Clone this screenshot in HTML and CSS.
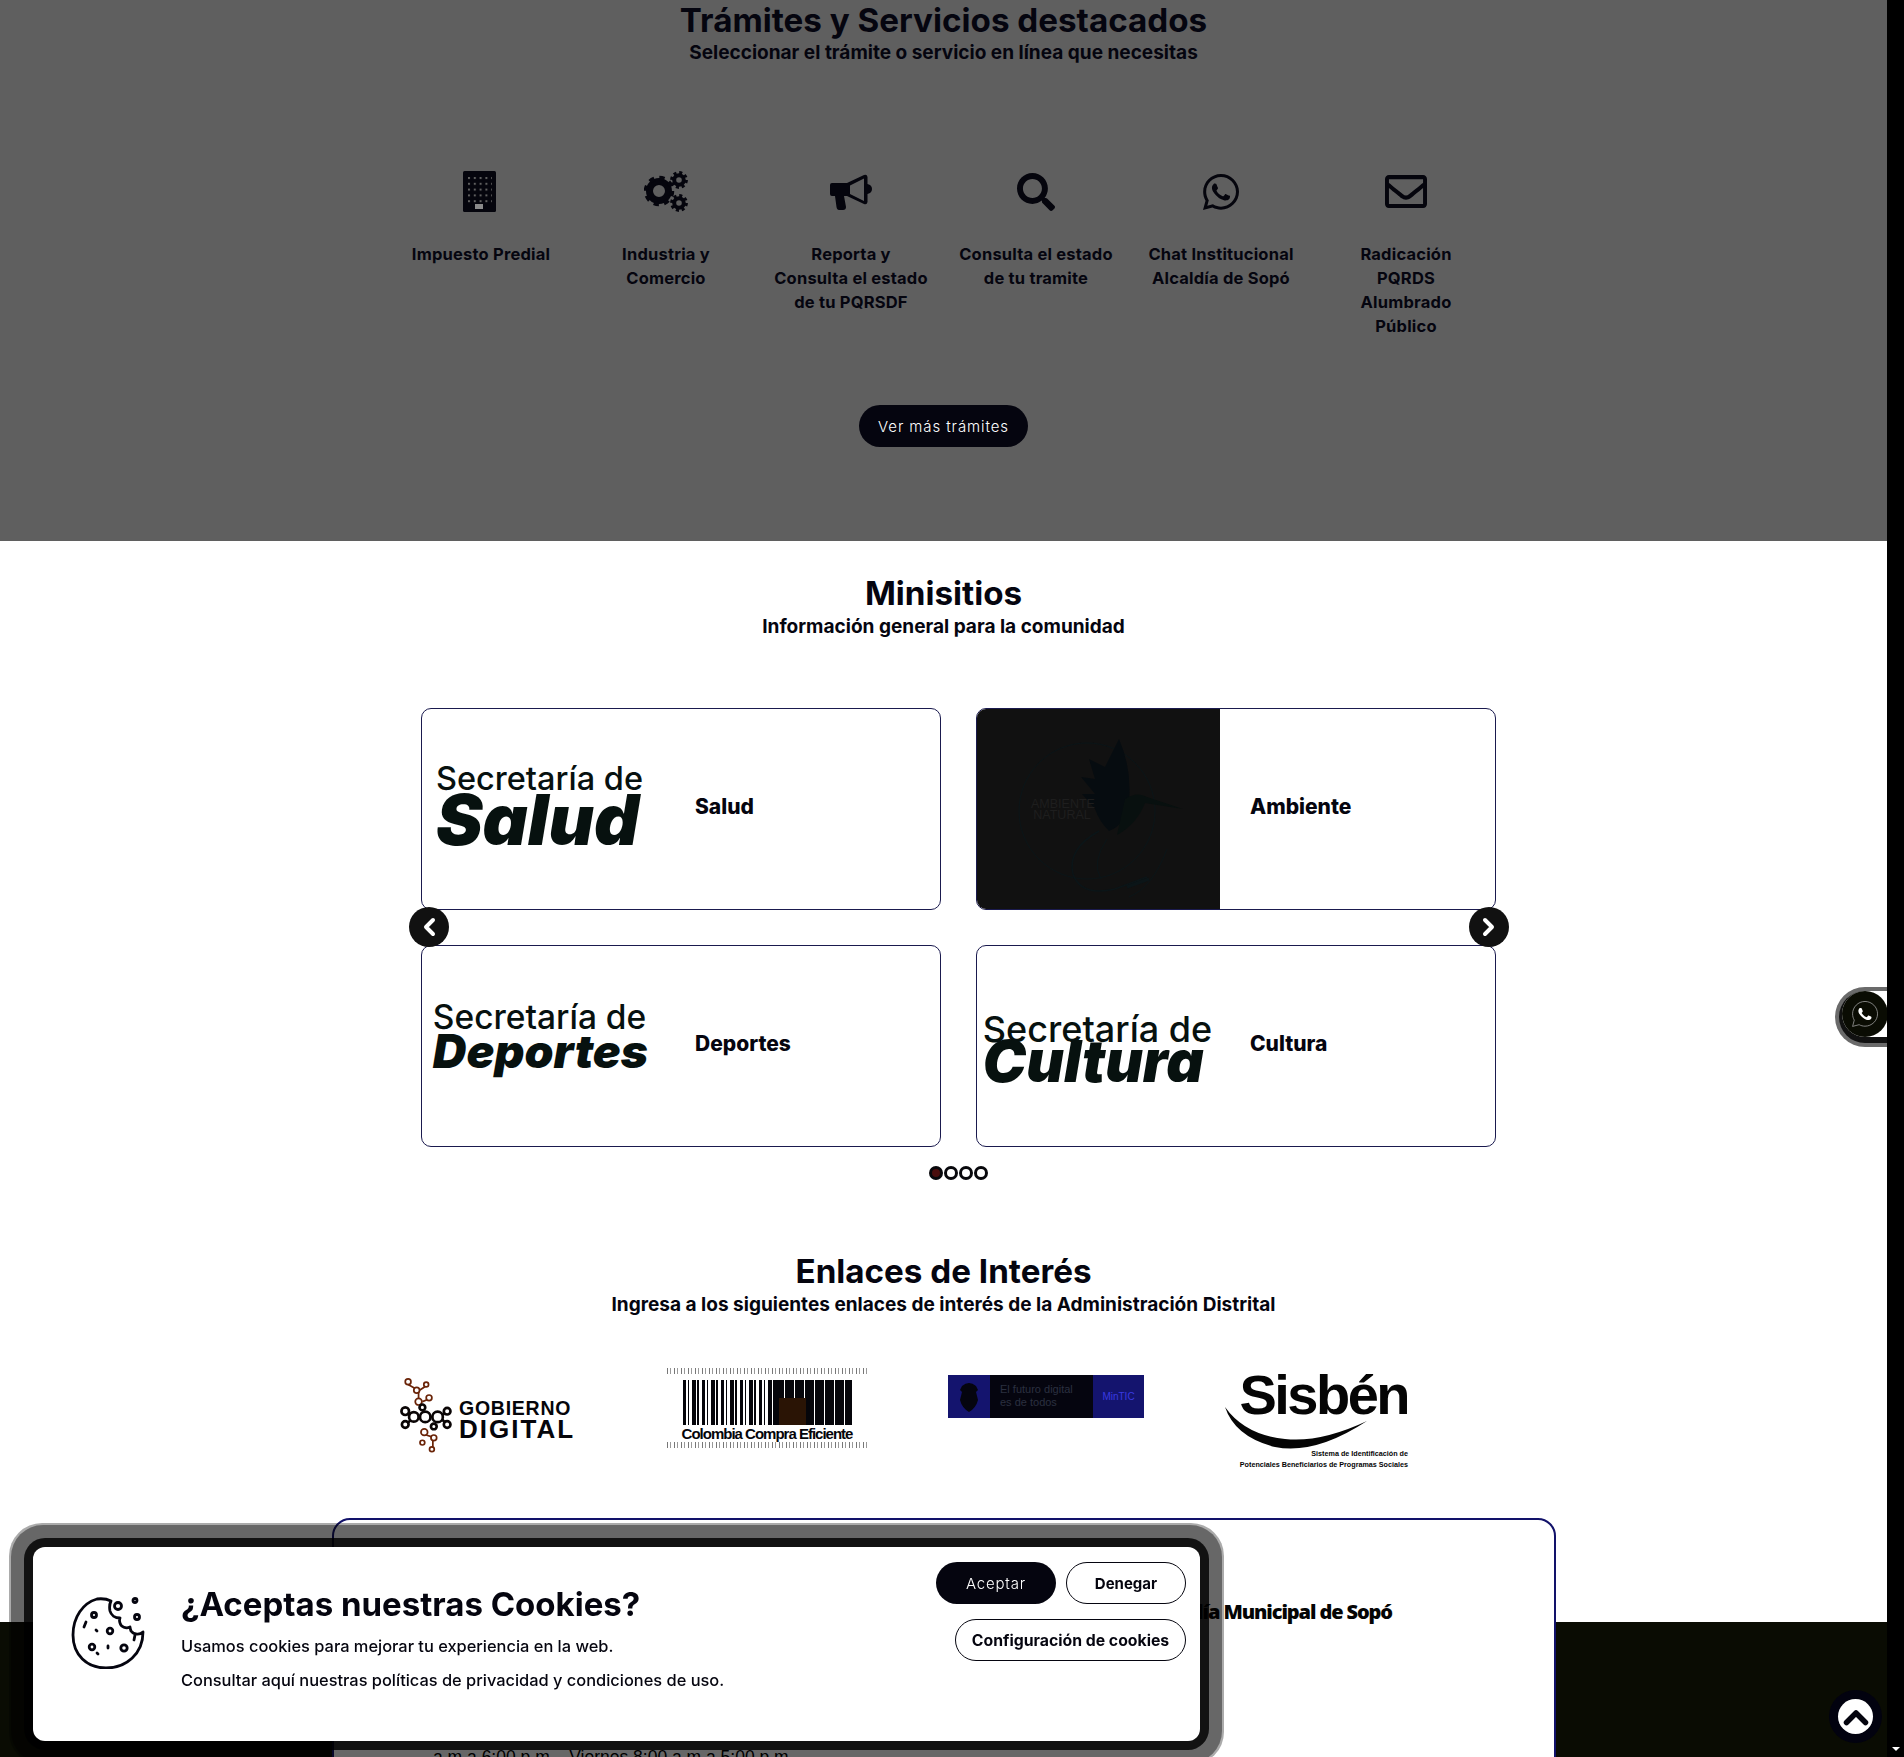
FILE: index.html
```html
<!DOCTYPE html>
<html lang="es">
<head>
<meta charset="utf-8">
<title>Alcaldía Municipal de Sopó</title>
<link rel="stylesheet" href="styles.css">
</head>
<body>
<div class="viewport">
  <main class="page">
    <section class="tramites">
      <h2 class="title">Trámites y Servicios destacados</h2>
      <p class="subtitle">Seleccionar el trámite o servicio en línea que necesitas</p>
      <div class="services">
        <a class="service">
          <span class="service-icon">
            <svg class="icon-building" width="33" height="41" viewBox="0 0 33 41"><defs><pattern id="win" x="5" y="6" width="5.8" height="5.8" patternUnits="userSpaceOnUse"><rect width="2" height="2" fill="#5f5f5f"/></pattern></defs><rect width="33" height="41" rx="1.5" fill="#05050d"/><rect x="5" y="6" width="24" height="28" fill="url(#win)"/><rect x="12" y="33" width="8" height="5" fill="#8a8a8a"/></svg>
          </span>
          <span class="service-label">Impuesto Predial</span>
        </a>
        <a class="service">
          <span class="service-icon">
            <svg width="44" height="41" viewBox="0 0 44 41" fill="none" stroke="#05050d"><circle cx="15" cy="20" r="9.5" stroke-width="7"/><circle cx="15" cy="20" r="13" stroke-width="4.5" stroke-dasharray="5.1 5.1"/><circle cx="35" cy="9" r="4.8" stroke-width="4"/><circle cx="35" cy="9" r="7.3" stroke-width="3.2" stroke-dasharray="3 2.73"/><circle cx="35" cy="32" r="4.8" stroke-width="4"/><circle cx="35" cy="32" r="7.3" stroke-width="3.2" stroke-dasharray="3 2.73"/></svg>
          </span>
          <span class="service-label">Industria y<br>Comercio</span>
        </a>
        <a class="service">
          <span class="service-icon">
            <svg width="42" height="36" viewBox="0 0 42 36" fill="#05050d"><path d="M2 9h15v13h-3l2 11q0 3-3 3H9q-2 0-2.500-3L5 22H2q-2 0-2-2V11q0-2 2-2z"/><path fill-rule="evenodd" d="M17 9 34 1q3-1 3.500 2v7q4.500 1 4.500 5t-4.500 5v8q-.5 3-3.500 2L17 22zM20 11.500v8.500l14 7V4.500z"/></svg>
          </span>
          <span class="service-label">Reporta y<br>Consulta el estado<br>de tu PQRSDF</span>
        </a>
        <a class="service">
          <span class="service-icon">
            <svg width="38" height="38" viewBox="0 0 512 512" fill="#05050d"><path d="M505 442.7L405.3 343c-4.500-4.500-10.600-7-17-7H372c27.600-35.300 44-79.700 44-128C416 93.100 322.900 0 208 0S0 93.100 0 208s93.100 208 208 208c48.300 0 92.700-16.400 128-44v16.300c0 6.400 2.500 12.500 7 17l99.700 99.700c9.400 9.400 24.600 9.400 33.900 0l28.300-28.300c9.400-9.400 9.400-24.600.100-34zM208 336c-70.700 0-128-57.200-128-128 0-70.700 57.200-128 128-128 70.700 0 128 57.200 128 128 0 70.700-57.200 128-128 128z"/></svg>
          </span>
          <span class="service-label">Consulta el estado<br>de tu tramite</span>
        </a>
        <a class="service">
          <span class="service-icon">
            <svg width="36" height="36" viewBox="0 32 448 448" fill="#05050d"><path d="M380.900 97.100C339 55.100 283.200 32 223.900 32c-122.400 0-222 99.600-222 222 0 39.100 10.200 77.300 29.600 111L0 480l117.700-30.900c32.400 17.700 68.900 27 106.100 27h.1c122.300 0 224.100-99.600 224.100-222 0-59.300-25.200-115-67.100-157zm-157 341.600c-33.200 0-65.700-8.900-94-25.700l-6.700-4-69.800 18.300L72 359.200l-4.400-7c-18.500-29.400-28.200-63.300-28.200-98.200 0-101.700 82.800-184.500 184.600-184.500 49.300 0 95.600 19.200 130.400 54.100 34.800 34.900 56.200 81.200 56.100 130.500 0 101.800-84.900 184.600-186.600 184.600zm101.200-138.200c-5.500-2.800-32.800-16.200-37.900-18-5.100-1.900-8.800-2.800-12.500 2.800-3.700 5.600-14.300 18-17.600 21.800-3.200 3.700-6.500 4.200-12 1.400-32.600-16.300-54-29.100-75.500-66-5.700-9.800 5.700-9.100 16.300-30.300 1.800-3.700.9-6.900-.5-9.700-1.400-2.800-12.500-30.100-17.100-41.200-4.500-10.800-9.100-9.300-12.500-9.500-3.200-.2-6.900-.2-10.600-.2-3.700 0-9.700 1.400-14.800 6.900-5.100 5.600-19.400 19-19.400 46.300 0 27.300 19.900 53.700 22.600 57.400 2.800 3.700 39.100 59.700 94.800 83.800 35.200 15.200 49 16.500 66.600 13.900 10.700-1.600 32.800-13.400 37.400-26.400 4.600-13 4.600-24.100 3.200-26.400-1.300-2.500-5-3.900-10.500-6.600z"/></svg>
          </span>
          <span class="service-label">Chat Institucional<br>Alcaldía de Sopó</span>
        </a>
        <a class="service">
          <span class="service-icon">
            <svg width="42" height="33" viewBox="0 64 512 384" preserveAspectRatio="none" fill="#05050d"><path d="M464 64H48C21.490 64 0 85.490 0 112v288c0 26.510 21.490 48 48 48h416c26.510 0 48-21.490 48-48V112c0-26.510-21.490-48-48-48zm0 48v40.805c-22.422 18.259-58.168 46.651-134.587 106.490-16.841 13.247-50.201 45.072-73.413 44.701-23.208.375-56.579-31.459-73.413-44.701C106.180 199.465 70.425 171.067 48 152.805V112h416zM48 400V214.398c22.914 18.251 55.409 43.862 104.938 82.646 21.857 17.205 60.134 55.186 103.062 54.955 42.717.231 80.509-37.199 103.053-54.947 49.528-38.783 82.032-64.401 104.947-82.653V400H48z"/></svg>
          </span>
          <span class="service-label">Radicación<br>PQRDS<br>Alumbrado<br>Público</span>
        </a>
      </div>
      <div class="more"><a class="pill pill-dark more-btn">Ver más trámites</a></div>
    </section>

    <section class="minisitios">
      <h2 class="title">Minisitios</h2>
      <p class="subtitle">Información general para la comunidad</p>
      <div class="slider">
        <div class="slider-grid">
          <a class="site">
            <span class="site-logo"><span class="sec sec-salud"><span class="sec-top">Secretaría de</span><span class="sec-big">Salud</span></span></span>
            <span class="site-name">Salud</span>
          </a>
          <a class="site">
            <span class="site-logo site-logo-dark">
              <svg width="244" height="202" viewBox="0 0 244 202" fill="none" stroke="#0b1518">
                <circle cx="110" cy="102" r="68" stroke-width="1"/>
                <path d="M142 30Q155 60 152 92 150 115 132 122 122 112 118 100L105 85 118 85 104 68 118 70 112 50 128 58Z" fill="#060c10" stroke="none"/>
                <path d="M148 90Q160 82 170 88L206 100 168 94Q160 115 140 126Z" fill="#08100f" stroke="none"/>
                <path d="M122 122Q90 140 96 165 104 188 138 180 160 172 170 168" stroke-width="1.500"/>
                <path d="M150 178l22-8" stroke-width="3"/>
                <path d="M130 130q-16 24-6 40" stroke-width="1"/>
                <path d="M152 188q24-10 38-48" stroke-width="1"/>
              </svg>
              <span class="amb-text">AMBIENTE<br>NATURAL</span>
            </span>
            <span class="site-name">Ambiente</span>
          </a>
          <a class="site">
            <span class="site-logo"><span class="sec sec-deportes"><span class="sec-top">Secretaría de</span><span class="sec-big">Deportes</span></span></span>
            <span class="site-name">Deportes</span>
          </a>
          <a class="site">
            <span class="site-logo"><span class="sec sec-cultura"><span class="sec-top">Secretaría de</span><span class="sec-big">Cultura</span></span></span>
            <span class="site-name">Cultura</span>
          </a>
        </div>
        <button class="arrow arrow-prev" aria-label="Anterior"><svg width="14" height="20" viewBox="0 0 14 20" fill="none" stroke="#fff" stroke-width="4" stroke-linecap="round" stroke-linejoin="round"><path d="M11 3l-7 7 7 7"/></svg></button>
        <button class="arrow arrow-next" aria-label="Siguiente"><svg width="14" height="20" viewBox="0 0 14 20" fill="none" stroke="#fff" stroke-width="4" stroke-linecap="round" stroke-linejoin="round"><path d="M3 3l7 7-7 7"/></svg></button>
        <div class="dots"><span class="dot dot-on"></span><span class="dot"></span><span class="dot"></span><span class="dot"></span></div>
      </div>
    </section>

    <section class="enlaces">
      <h2 class="title">Enlaces de Interés</h2>
      <p class="subtitle">Ingresa a los siguientes enlaces de interés de la Administración Distrital</p>
      <div class="links">
        <a class="link-gob">
          <svg width="62" height="80" viewBox="3 0 62 84" fill="none" stroke="#0a0505" stroke-width="2.800">
            <g stroke="#6a2408" stroke-width="1.800"><circle cx="11" cy="7" r="3"/><circle cx="20" cy="16" r="3"/><circle cx="30" cy="10" r="2.500"/><circle cx="22" cy="28" r="3.500"/><circle cx="33" cy="24" r="3"/><circle cx="28" cy="60" r="3.500"/><circle cx="38" cy="66" r="3"/><circle cx="36" cy="78" r="2.500"/><circle cx="26" cy="71" r="2.500"/><path d="M11 10l7 4M22 18l0 7M23 16l6-4M26 28l5-2M30 63l6 2M37 69l0 7"/></g>
            <circle cx="8" cy="38" r="4"/><circle cx="17" cy="44" r="5"/><circle cx="29" cy="44" r="5.500"/><circle cx="42" cy="44" r="5.500"/><circle cx="52" cy="38" r="3.500"/><circle cx="8" cy="52" r="3.500"/><circle cx="52" cy="52" r="3.500"/><circle cx="26" cy="34" r="3"/><circle cx="38" cy="54" r="3"/>
            <path d="M11 40l2 2M22 44h2M34 44h3M47 42l3-2M11 50l3-3M47 47l3 3"/>
          </svg>
          <span class="gob-text"><span class="gob-1">GOBIERNO</span><span class="gob-2">DIGITAL</span></span>
        </a>
        <a class="link-cce">
          <span class="noise"></span>
          <span class="barcode"><span class="barcode-box"></span></span>
          <span class="cce-text">Colombia Compra Eficiente</span>
          <span class="noise"></span>
        </a>
        <a class="link-tic">
          <span class="tic-shield"><svg width="22" height="30" viewBox="0 0 22 30" fill="#05050f"><path d="M4 4q7-6 14 0l2 4-2 2 2 8q-2 8-9 12-7-4-9-12l2-8-2-2z"/></svg></span>
          <span class="tic-mid">El futuro digital<br>es de todos</span>
          <span class="tic-end">MinTIC</span>
        </a>
        <a class="link-sis">
          <span class="sis-name">Sisbén</span>
          <svg class="sis-swoosh" width="142" height="43" viewBox="0 0 142 43" fill="#050505"><path d="M0 0Q10 30 50 40 90 48 142 14 95 36 60 32 20 28 0 0Z"/></svg>
          <span class="sis-small">Sistema de Identificación de<br>Potenciales Beneficiarios de Programas Sociales</span>
        </a>
      </div>
    </section>

    <section class="horario">
      <div class="horario-card">
        <h3 class="horario-title">Alcaldía Municipal de Sopó</h3>
        <p class="horario-line">a.m a 6:00 p.m &nbsp; &nbsp;Viernes 8:00 a.m a 5:00 p.m</p>
      </div>
    </section>
  </main>
  <div class="scrollbar"><span class="scroll-down"></span></div>
</div>

<a class="wa-float" aria-label="WhatsApp">
  <span class="wa-circle">
    <svg width="26" height="26" viewBox="0 32 448 448"><path fill="none" stroke="#9a9a9a" stroke-width="14" d="M224 40C106 40 10 136 10 254c0 38 10 75 29 108L10 470l113-30c31 17 66 26 101 26 118 0 216-96 216-212S342 40 224 40z"/><path fill="#fff" d="M325 300c-6-3-33-16-38-18s-9-3-12 3-14 18-18 22-6 4-12 1c-33-16-54-29-76-66-6-10 6-9 16-30 2-4 1-7-1-10s-12-30-17-41c-5-11-9-9-12-10h-11c-4 0-10 1-15 7s-19 19-19 46 20 54 23 57 39 60 95 84c35 15 49 17 67 14 11-2 33-13 37-26s5-24 3-26-5-4-10-7z"/></svg>
  </span>
</a>

<a class="to-top" aria-label="Subir">
  <svg width="26" height="18" viewBox="0 0 26 18" fill="none" stroke="#05050f" stroke-width="5.500" stroke-linecap="round" stroke-linejoin="round"><path d="M3.500 14.500L13 5l9.500 9.500"/></svg>
</a>

<aside class="cookie">
  <svg class="cookie-icon" width="74" height="72" viewBox="0 0 74 72" fill="none" stroke="#05050f" stroke-width="2.800" stroke-linecap="round" stroke-linejoin="round">
    <path d="M26 2C12 6 2 20 2 38c0 20 14 33 33 33 20 0 37-14 37-36-3 3-9 3-12-1-1-3-1-4-1-4-4 2-9 0-10-4-1-3 0-5 0-5-5 0-9-3-10-7-1-5 0-8 1-10q-6-3-14-2z"/>
    <circle cx="47" cy="9" r="3.500"/><circle cx="64" cy="3.500" r="2"/><circle cx="66" cy="20" r="2.500"/>
    <circle cx="23" cy="18" r="2.500"/><circle cx="39" cy="34" r="2.800"/><circle cx="21" cy="50" r="2.800"/><circle cx="53" cy="51" r="3.200"/>
    <path d="M15 25l-2 5M25 33l1 1M37 49v2M26 56l1 1M64 38l-1 5"/>
  </svg>
  <div class="cookie-body">
    <h4 class="cookie-title">¿Aceptas nuestras Cookies?</h4>
    <p class="cookie-text">Usamos cookies para mejorar tu experiencia en la web.</p>
    <p class="cookie-text">Consultar aquí nuestras políticas de privacidad y condiciones de uso.</p>
  </div>
  <div class="cookie-actions">
    <div class="cookie-row">
      <button class="pill pill-dark cookie-btn">Aceptar</button>
      <button class="pill pill-line cookie-btn">Denegar</button>
    </div>
    <button class="pill pill-line cookie-btn">Configuración de cookies</button>
  </div>
</aside>
</body>
</html>
```
FILE: styles.css
```css
* { box-sizing: border-box; }
html, body { margin: 0; padding: 0; height: 1757px; overflow: hidden; background: #fff; }
body { font-family: "Inter", "Liberation Sans", sans-serif; color: #05050f; }

.viewport { display: flex; width: 1904px; height: 1757px; overflow: hidden; }
.page { width: 1887px; flex: none; overflow: hidden; }
.scrollbar { position: relative; z-index: 4; width: 17px; flex: none; background: #000; display: flex; flex-direction: column; justify-content: flex-end; align-items: center; padding-bottom: 6px; }
.scroll-down { width: 0; height: 0; border-left: 4px solid transparent; border-right: 4px solid transparent; border-top: 4px solid #fff; }

.title { margin: 0; font-size: 33.2px; line-height: 38px; font-weight: 700; text-align: center; }
.subtitle { margin: 2px 0 0; font-size: 19.05px; line-height: 24px; font-weight: 700; text-align: center; }

.tramites { height: 541px; padding-top: 1px; background: #5f5f5f; }
.services { display: grid; grid-template-columns: repeat(6, 185px); width: 1110px; margin: 106px auto 0; }
.service { display: flex; flex-direction: column; align-items: center; text-align: center; }
.service-icon { height: 41px; display: flex; align-items: center; justify-content: center; }
.icon-building { margin-right: 3px; }
.service-label { margin-top: 30px; font-size: 16.5px; line-height: 24px; font-weight: 700; letter-spacing: .2px; min-height: 24px; white-space: nowrap; }
.more { display: flex; justify-content: center; margin-top: 67px; }

.pill { display: inline-flex; align-items: center; justify-content: center; height: 42px; border-radius: 21px; font-family: inherit; }
.pill-dark { background: #05050f; color: #fff; border: none; font-weight: 300; }
.pill-line { background: #fff; color: #05050f; border: 1.5px solid #05050f; font-weight: 700; }
.more-btn { width: 169px; font-size: 15px; letter-spacing: .9px; }

.minisitios { height: 639px; padding-top: 33px; }
.minisitios .subtitle, .enlaces .subtitle { margin-top: 3px; }
.slider { position: relative; width: 1075px; margin: 69px 0 0 421px; }
.slider-grid { display: grid; grid-template-columns: 520px 520px; grid-auto-rows: 202px; gap: 35px; }
.site { display: flex; align-items: center; border: 1px solid #1a1a4e; border-radius: 10px; overflow: hidden; }
.site-logo { position: relative; width: 243px; height: 100%; flex: none; display: flex; align-items: center; justify-content: center; }
.site-logo-dark { background: #111; }
.site-name { margin-left: 30px; margin-top: -5px; font-size: 21px; line-height: 24px; font-weight: 800; }

.sec { display: flex; flex-direction: column; color: #07110f; line-height: 1; }
.sec-top { font-weight: 500; white-space: nowrap; }
.sec-big { font-weight: 900; font-style: italic; white-space: nowrap; }
.sec-salud { margin: -11px 0 0 -8px; }
.sec-salud .sec-top { font-size: 32.5px; line-height: 32px; }
.sec-salud .sec-big { font-size: 70px; line-height: 50px; letter-spacing: 0; }
.sec-deportes { margin: -22px 0 0 -6px; }
.sec-deportes .sec-top { font-size: 33.5px; line-height: 32px; }
.sec-deportes .sec-big { font-size: 46.5px; line-height: 37px; letter-spacing: 0; }
.sec-cultura { margin: -5px 0 0 -2px; }
.sec-cultura .sec-top { font-size: 36px; line-height: 34px; }
.sec-cultura .sec-big { font-size: 58px; line-height: 30px; }

.amb-text { position: absolute; left: 54px; top: 90px; width: 62px; font-family: "Liberation Sans", sans-serif; font-size: 12.5px; line-height: 11px; color: #1e1e1e; text-align: center; }
.site-logo-dark svg { position: absolute; left: 0; top: 0; }

.arrow { position: absolute; top: 199px; width: 40px; height: 40px; padding: 0; border: none; border-radius: 50%; background: #111; display: flex; align-items: center; justify-content: center; }
.arrow-prev { left: -12px; }
.arrow-next { right: -13px; }
.dots { display: flex; justify-content: center; gap: 1px; margin-top: 19px; }
.dot { width: 14px; height: 14px; border-radius: 50%; border: 3px solid #08080c; background: #fff; }
.dot-on { background: #4a0d0d; }

.enlaces { height: 338px; padding-top: 72px; }
.links { display: grid; grid-template-columns: 268px 281px 274px 186px; margin: 51px 0 0 399px; height: 108px; }
.link-gob { display: flex; align-items: center; height: 80px; margin-top: 7px; }
.gob-text { display: flex; flex-direction: column; margin-left: -2px; margin-top: 8px; font-family: "Liberation Sans", sans-serif; color: #05050a; font-weight: 700; }
.gob-1 { font-size: 19.5px; line-height: 21px; letter-spacing: .75px; }
.gob-2 { font-size: 26px; line-height: 21px; letter-spacing: 2px; }

.link-cce { display: flex; flex-direction: column; width: 200px; height: 80px; align-items: center; }
.noise { width: 100%; height: 6px; flex: none; background: repeating-linear-gradient(90deg, #777 0 1px, #fff 1px 3px, #999 3px 4px, #fff 4px 7px); }
.barcode { position: relative; display: block; width: 169px; height: 45px; margin-top: 6px; flex: none; background: repeating-linear-gradient(90deg, #05050a 0 3px, #fff 3px 5px, #05050a 5px 6px, #fff 6px 9px, #05050a 9px 13px, #fff 13px 14px, #05050a 14px 16px, #fff 16px 19px) 0 0 / 92px 100% no-repeat, repeating-linear-gradient(90deg, #05050a 0 9px, #fff 9px 10px) 92px 0 / 77px 100% no-repeat; }
.barcode-box { position: absolute; left: 96px; top: 18px; width: 27px; height: 27px; background: #2a1405; }
.cce-text { flex: none; height: 17px; font-family: "Liberation Sans", sans-serif; font-size: 15px; line-height: 17px; letter-spacing: -1px; font-weight: 700; white-space: nowrap; color: #05050a; }

.link-tic { display: flex; width: 196px; height: 43px; margin-top: 7px; background: #14146e; }
.tic-shield { width: 42px; display: flex; align-items: center; justify-content: center; }
.tic-mid { width: 103px; background: #05050f; padding: 8px 0 0 10px; font-size: 11px; line-height: 13px; color: #2b3040; font-family: "Liberation Sans", sans-serif; white-space: nowrap; }
.tic-end { flex: 1; display: flex; align-items: center; justify-content: center; font-size: 10px; color: #3a3ae0; font-family: "Liberation Sans", sans-serif; }

.link-sis { position: relative; display: flex; flex-direction: column; align-items: flex-end; width: 186px; height: 108px; }
.sis-name { margin-top: -3px; font-family: "Liberation Sans", sans-serif; font-size: 56px; line-height: 60px; letter-spacing: -2.5px; font-weight: 700; color: #050505; white-space: nowrap; }
.sis-swoosh { position: absolute; left: 3px; top: 39px; }
.sis-small { margin-top: 23px; font-family: "Liberation Sans", sans-serif; font-size: 7.2px; line-height: 11px; font-weight: 700; text-align: right; white-space: nowrap; color: #050505; }

.horario { height: 239px; background: linear-gradient(#fff 104px, #0a0c03 104px); }
.horario-card { width: 1224px; height: 300px; margin-left: 332px; background: #fff; border: 2px solid #12126a; border-radius: 18px; padding: 78px 0 0 99px; }
.horario-title { margin: 0; padding-right: 162px; font-family: "Open Sans", "Liberation Sans", sans-serif; font-size: 20px; line-height: 28px; font-weight: 800; letter-spacing: -1.1px; color: #050505; text-align: right; }
.horario-line { margin: 122px 0 0; font-family: "Liberation Sans", sans-serif; font-size: 17.5px; line-height: 18px; color: #000; white-space: nowrap; }

.wa-float { position: fixed; left: 1842px; top: 991px; width: 60px; height: 46px; border-radius: 23px 0 0 23px; background: #fff; box-shadow: 0 3px 0 3px #111, 0 3px 0 7px #6a6a6a; z-index: 3; }
.wa-circle { display: flex; align-items: center; justify-content: center; position: absolute; left: 0; top: 0; width: 46px; height: 46px; border-radius: 50%; background: #0a0c03; }

.to-top { position: fixed; left: 1838px; top: 1699px; width: 35px; height: 35px; border-radius: 50%; background: #fff; box-shadow: 0 0 0 9px #02020f; display: flex; align-items: center; justify-content: center; z-index: 3; }

.cookie { position: fixed; left: 33px; top: 1547px; width: 1167px; height: 194px; display: flex; background: #fff; border-radius: 12px; padding: 50px 24px 0 38px; z-index: 5;
  box-shadow: 0 0 0 9px rgba(0, 0, 0, .825), 0 0 0 22px rgba(0, 0, 0, .4), 0 0 0 24px rgba(0, 0, 0, .33); }
.cookie-icon { flex: none; }
.cookie-body { margin-left: 36px; flex: 1; margin-top: -12px; }
.cookie-title { margin: 0 0 11px; font-size: 33px; line-height: 38px; font-weight: 700; }
.cookie-text { margin: 0 0 10px; font-size: 16.4px; line-height: 24px; font-weight: 500; }
.cookie-actions { position: absolute; right: 14px; top: 15px; display: flex; flex-direction: column; align-items: flex-end; gap: 15px; }
.cookie-row { display: flex; gap: 10px; }
.cookie-btn { font-size: 15px; padding: 0; }
.cookie-btn.pill-dark { letter-spacing: .8px; }
.cookie-row .cookie-btn { width: 120px; }
.cookie-actions > .cookie-btn { width: 231px; font-size: 15.8px; }
```
